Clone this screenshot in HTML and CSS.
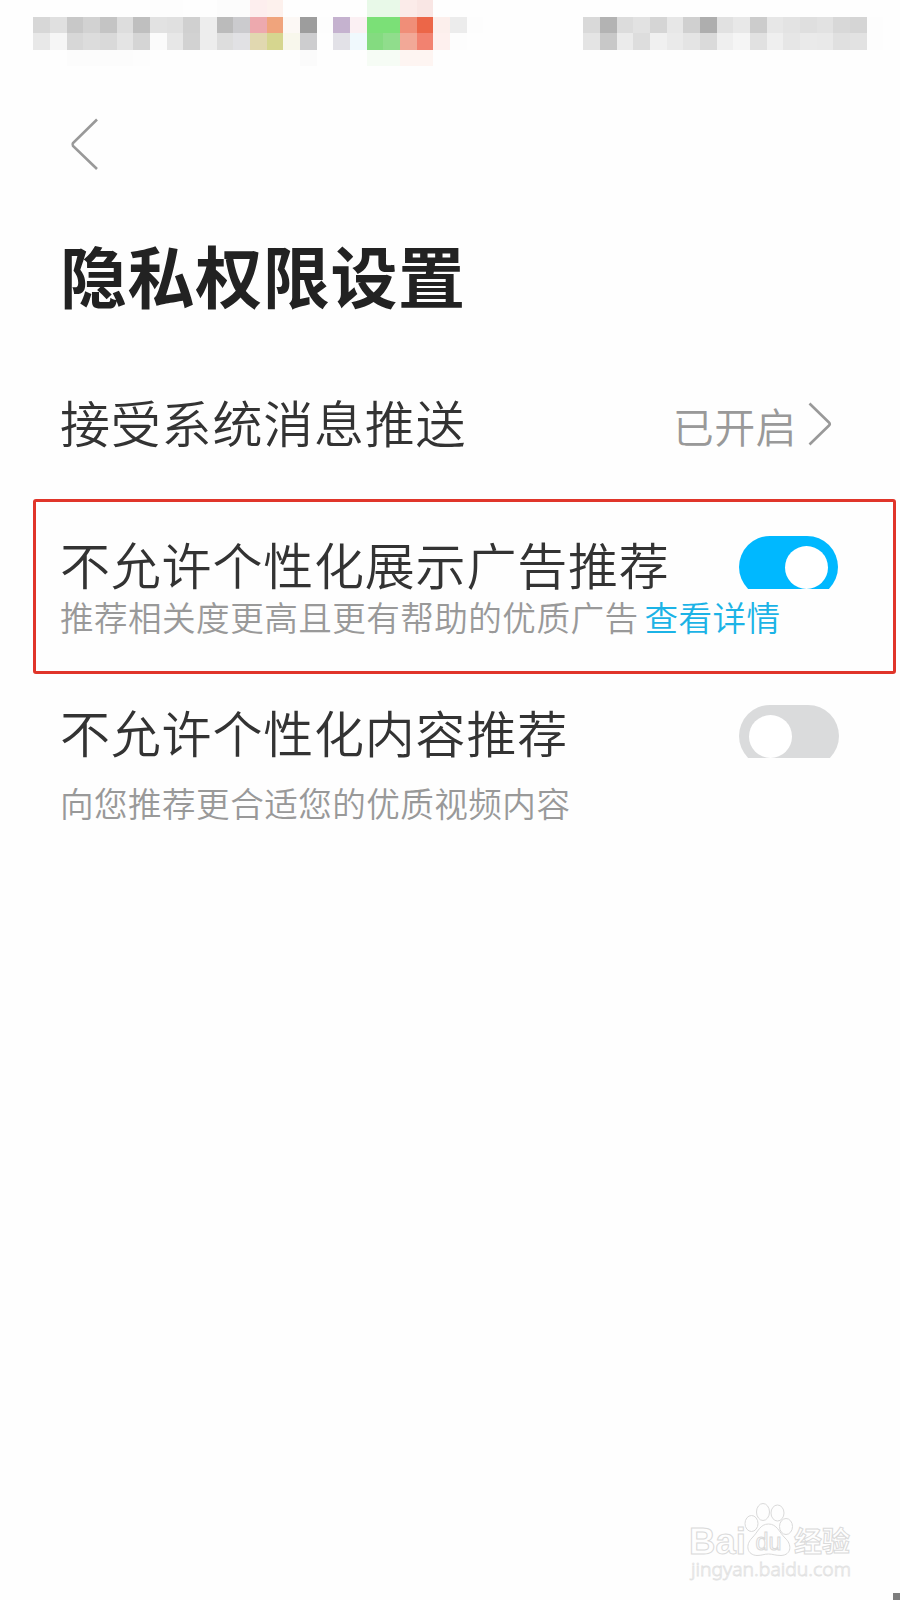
FILE: index.html
```html
<!DOCTYPE html>
<html lang="zh-CN">
<head>
  <meta charset="UTF-8" />
  <meta name="viewport" content="width=device-width, initial-scale=1.0" />
  <title>隐私权限设置</title>
  <link rel="stylesheet" href="styles.css">
</head>
<body>
  <div class="status-bar" id="statusBar"></div>
  <header>
    <svg class="back" width="30" height="54" viewBox="0 0 30 54">
      <path d="M27 2.5 L3 26 Q2 27.5 3 29 L27 52" />
    </svg>
    <h1>隐私权限设置</h1>
  </header>
  <main>
    <div class="row row-push">
      <span class="label">接受系统消息推送</span>
      <div class="state">
        <span>已开启</span>
        <svg class="arrow" width="24" height="46" viewBox="0 0 24 46">
          <path d="M1.500 2.500 L21 21.500 Q22.500 23 21 24.500 L1.500 43.500" />
        </svg>
      </div>
    </div>
    <section class="item highlight">
      <div class="row">
        <span class="label">不允许个性化展示广告推荐</span>
        <div class="toggle on"><div class="track"><div class="knob"></div></div></div>
      </div>
      <p class="desc">推荐相关度更高且更有帮助的优质广告<a class="link">查看详情</a></p>
    </section>
    <section class="item content">
      <div class="row">
        <span class="label">不允许个性化内容推荐</span>
        <div class="toggle"><div class="track"><div class="knob"></div></div></div>
      </div>
      <p class="desc">向您推荐更合适您的优质视频内容</p>
    </section>
  </main>
  <svg class="watermark" width="180" height="90" viewBox="0 0 180 90">
    <g class="logo">
      <text x="7" y="53.500" font-size="36" textLength="57" lengthAdjust="spacingAndGlyphs">Bai</text>
      <ellipse cx="69.500" cy="23.500" rx="6.500" ry="8" />
      <ellipse cx="81" cy="12" rx="6.500" ry="8.500" />
      <ellipse cx="95.500" cy="13" rx="6.500" ry="8" />
      <ellipse cx="104" cy="26.500" rx="6.500" ry="8" />
      <path d="M86.500 24 C95 24 97 32 103 38 C110 44 110 55 99 55.500 C93 55.500 91 54 86.500 54 C82 54 80 55.500 75 55.500 C65 55 63 45 70 38 C76 32 78 24 86.500 24 Z" />
      <text x="73.500" y="50" font-size="23" textLength="26" lengthAdjust="spacingAndGlyphs" class="du">du</text>
      <text class="cjk" x="112" y="52" font-size="28" textLength="56">经验</text>
    </g>
    <text class="site" x="9" y="76" font-size="19" textLength="160" lengthAdjust="spacingAndGlyphs">jingyan.baidu.com</text>
  </svg>
  <div class="corner"></div>
  <script>
    // each row: [first cell, colours...], the bar is 54 cells wide
    const rows = [
      [[9, 'fdfdfd', 'fdfdfd'], [13, 'fcfcfc', 'fcfcfc', 'fdeeee', 'fdf1ed'], [22, 'e8f9e8', 'e8f9e8', 'fbebe9', 'f9e6e4']],
      [[2, 'd7d7d7', 'e0e0e0', 'c8c8c8', 'd2d2d2', 'c4c4c4', 'dddddd', 'bfbfbf', 'e2e2e2', 'e0e0e0', 'd0d0d0', 'ededed', 'bbbbbb', 'cbcbce', 'eda9ae', 'f0a47c', 'fcf8f5', '9d9d9d', 'fdfdfd', 'c5b2cf', 'fbf0f3', '7be077', '7be077', 'f08e78', 'ec6648', 'fcefec', 'ececec', 'fdfdfd'],
       [35, 'd9d9d9', 'b3b3b3', 'dcdcdc', 'e2e2e2', 'd5d5d5', 'e7e7e7', 'd0d0d0', 'aeaeae', 'e1e1e1', 'e8e8e8', 'cccccc', 'e7e7e7', 'e3e3e3', 'dfdfdf', 'e2e2e2', 'd8d8d8', 'd5d5d5', 'fdfdfd']],
      [[2, 'e8e8e8', 'f6f6f6', 'd7d7d7', 'dcdcdc', 'd9d9d9', 'e4e4e4', 'd5d5d5', 'fbfbfb', 'e7e7e7', 'd2d2d2', 'ededed', 'dddddd', 'e1e1e4', 'e1d8b0', 'd6d68f', 'f8f7ec', 'cdcdcf', 'fefefe', 'e2e1e7', 'f0f9fd', '84db80', '90dd8c', 'f2a897', 'f28270', 'fef0ee', 'fdfdfd'],
       [35, 'e4e4e4', 'c8c8c8', 'ebebeb', 'dddddd', 'f0f0f0', 'eaeaea', 'e4e4e4', 'dadada', 'efefef', 'f5f5f5', 'e1e1e1', 'efefef', 'e6e6e6', 'eaeaea', 'e9e9e9', 'e0e0e0', 'e2e2e2', 'fdfdfd']],
      [[4, 'fcfcfc', 'fcfcfc', 'fcfcfc', 'fcfcfc', 'fdfdfd'], [18, 'fbfbfb'], [22, 'f6fcf5', 'f6fcf5', 'fef5f2', 'fef5f2']]
    ];
    const bar = document.getElementById('statusBar');
    rows.forEach(runs => {
      const colors = Array(54).fill('fefefe');
      runs.forEach(([start, ...list]) => list.forEach((c, i) => colors[start + i] = c));
      colors.forEach(c => {
        const cell = document.createElement('i');
        cell.style.background = '#' + c;
        bar.appendChild(cell);
      });
    });
  </script>
</body>
</html>
```
FILE: styles.css
```css
* { box-sizing: border-box; }
body {
  margin: 0;
  width: 900px;
  height: 1600px;
  overflow: hidden;
  position: relative;
  font-family: "Noto Sans CJK SC", sans-serif;
  font-weight: 350;
  background: #fefefe;
  color: #333;
}
.status-bar {
  display: grid;
  grid-template-columns: repeat(54, 1fr);
  grid-template-rows: 16.67px 16.67px 16.66px 16px;
  height: 66px;
}
header {
  height: 304px;
  padding: 51px 60px 0;
}
.back {
  display: block;
  margin-left: 10px;
}
svg.back path, svg.arrow path {
  fill: none;
  stroke: #999;
  stroke-width: 2.6;
}
h1 {
  margin: 53px 0 0;
  font-size: 67px;
  line-height: 100px;
  letter-spacing: 0.6px;
  font-weight: 700;
  color: #222;
}
.row {
  display: flex;
  justify-content: space-between;
}
.row-push {
  height: 129px;
  padding: 21px 68px 0 60px;
}
.label {
  font-size: 50px;
  line-height: 60px;
  letter-spacing: 0.8px;
  white-space: nowrap;
}
.state {
  display: flex;
  font-size: 41px;
  line-height: 68px;
  color: #999;
}
.arrow {
  margin: 10px 0 0 11px;
}
.state span {
  letter-spacing: 0.4px;
}
.item {
  margin: 0 4px 0 33px;
}
.highlight {
  height: 175px;
  padding: 31px 55px 0 24px;
  border: 3px solid #e0352a;
  border-radius: 3px;
}
.content {
  padding: 27px 57px 0 27px;
}
.content .row {
  height: 78px;
}
.desc {
  margin: 0;
  font-size: 33.6px;
  line-height: 48px;
  letter-spacing: 0.45px;
  color: #999;
  white-space: nowrap;
}
.link {
  margin-left: 6px;
  color: #1bb3e6;
}
/* the switches are cut off at the bottom */
.toggle {
  width: 100px;
  height: 53px;
  margin-top: 4px;
  overflow: hidden;
}
.track {
  height: 62px;
  padding: 9.5px 10px;
  border-radius: 31px;
  background: #dadbdc;
}
.knob {
  width: 43px;
  height: 43px;
  border-radius: 50%;
  background: #fff;
}
.toggle.on { width: 99px; margin-top: 3px; }
.on .track { background: #00b8ff; }
.on .knob { margin-left: auto; }
.watermark {
  position: absolute;
  left: 682px;
  top: 1500px;
  font-family: "Liberation Sans", sans-serif;
}
.logo {
  fill: #fefefe;
  stroke: #dadada;
  stroke-width: 1;
  font-weight: 700;
}
.cjk { font-family: "Noto Sans CJK SC", sans-serif; }
.du { font-weight: 400; }
.site {
  fill: #fefefe;
  stroke: #e2e2e2;
  stroke-width: 0.8;
  font-family: "Noto Sans", sans-serif;
}
.corner {
  position: absolute;
  right: 0;
  bottom: 0;
  width: 7px;
  height: 7px;
  background: #7d7d7d;
}
```
